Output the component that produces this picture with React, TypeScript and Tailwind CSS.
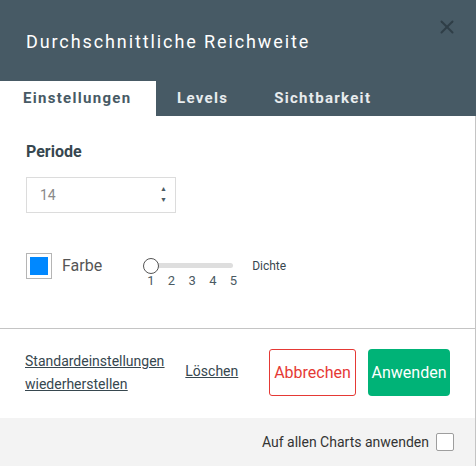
import { X } from "lucide-react";

export default function App() {
  return (
    <div className="w-[476px] h-[466px] flex flex-col bg-white font-['Roboto',sans-serif] overflow-hidden">
      <header className="relative h-[116px] bg-[#475a65] flex flex-col">
        <h1 className="pl-[26px] pt-[30px] h-[81px] text-[18px] leading-[24px] tracking-[1.9px] text-white">
          Durchschnittliche Reichweite
        </h1>
        <button className="absolute right-[18px] top-[16px] text-[#2f3e47]">
          <X size={22} strokeWidth={2.2} />
        </button>
        <nav className="flex h-[35px] text-[15px] font-bold tracking-[1.3px]">
          <div className="w-[156px] bg-white text-[#475a65] pl-[23px] flex items-center">Einstellungen</div>
          <div className="pl-[21px] text-[#e8ecee] flex items-center">Levels</div>
          <div className="pl-[46px] text-[#e8ecee] flex items-center">Sichtbarkeit</div>
        </nav>
      </header>

      <section className="h-[213px] border-r border-b border-[#c4c4c4] px-[26px] pt-[26px]">
        <label className="block text-[16px] leading-[20px] font-bold text-[#37474f]">Periode</label>
        <div className="mt-[15px] w-[150px] h-[36px] border border-[#dcdcdc] flex items-center justify-between pl-[13px] pr-[8px]">
          <span className="text-[14px] text-[#8a8a8a]">14</span>
          <div className="flex flex-col text-[7px] leading-[11px] text-[#4b5a63]">
            <span>▲</span>
            <span>▼</span>
          </div>
        </div>

        <div className="mt-[40px] flex items-start">
          <div className="w-[26px] h-[26px] border border-[#b5b5b5] p-[3px]">
            <div className="w-full h-full bg-[#0088ff]" />
          </div>
          <span className="ml-[10px] text-[16px] leading-[26px] text-[#555]">Farbe</span>
          <div className="ml-[41px] mt-[5px] flex flex-col w-[96px]">
            <div className="relative h-[15px] flex items-center">
              <div className="ml-[7px] w-[83px] h-[5px] rounded-full bg-[#dedede]" />
              <div className="absolute left-0 top-0 w-[16px] h-[16px] rounded-full border border-[#555] bg-white" />
            </div>
            <div className="flex justify-between pl-[4px] pr-[2px] text-[13px] leading-[15px] text-[#4b5a63]">
              <span>1</span>
              <span>2</span>
              <span>3</span>
              <span>4</span>
              <span>5</span>
            </div>
          </div>
          <span className="ml-[13px] mt-[5px] text-[12px] leading-[16px] text-[#37474f]">Dichte</span>
        </div>
      </section>

      <footer className="h-[89px] border-r border-[#c4c4c4] flex items-start pt-[20px] pl-[25px] pr-[25px]">
        <div className="flex flex-col pt-[1px] text-[14px] leading-[23px] text-[#37474f] underline">
          <a>Standardeinstellungen</a>
          <a>wiederherstellen</a>
        </div>
        <a className="ml-[21px] mt-[13px] text-[14px] leading-[18px] text-[#37474f] underline">Löschen</a>
        <button className="ml-auto w-[87px] h-[47px] border border-[#e53935] rounded-[3px] text-[16px] text-[#e53935] bg-white">
          Abbrechen
        </button>
        <button className="ml-[12px] w-[82px] h-[47px] rounded-[4px] bg-[#00b377] text-[16px] text-white">
          Anwenden
        </button>
      </footer>

      <div className="flex-1 bg-[#f3f3f3] border-r border-[#c4c4c4] flex items-center justify-end pr-[21px]">
        <span className="text-[14px] text-[#333]">Auf allen Charts anwenden</span>
        <div className="ml-[7px] w-[18px] h-[18px] border border-[#9e9e9e] rounded-[2px] bg-white" />
      </div>
    </div>
  );
}
